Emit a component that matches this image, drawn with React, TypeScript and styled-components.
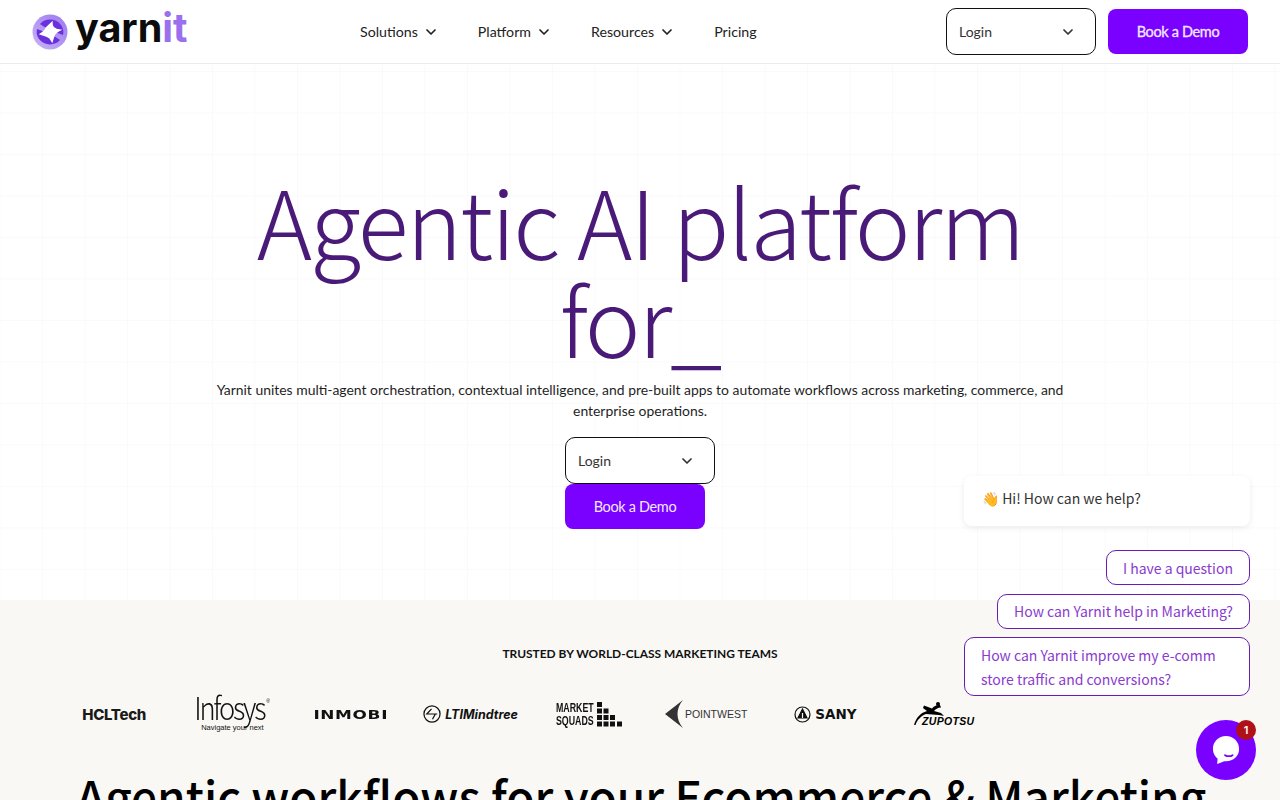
import styled, { createGlobalStyle } from 'styled-components'
import { ChevronDown } from 'lucide-react'

const GlobalStyle = createGlobalStyle`
  html, body {
    margin: 0;
    padding: 0;
    height: 800px;
    overflow: hidden;
    background: #fff;
  }
  * { box-sizing: border-box; }
`

const NAV_ITEMS = ['Solutions', 'Platform', 'Resources']

const CHAT_OPTIONS = [
  'I have a question',
  'How can Yarnit help in Marketing?',
  'How can Yarnit improve my e-comm store traffic and conversions?',
]

function LogoMark () {
  return (
    <svg width="36" height="36" viewBox="0 0 36 36">
      <defs>
        <linearGradient id="ring" x1="0" y1="1" x2="1" y2="0">
          <stop offset="0" stopColor="#c9b4f9" />
          <stop offset="1" stopColor="#9a78ee" />
        </linearGradient>
      </defs>
      <circle cx="18" cy="18" r="17.500" fill="url(#ring)" />
      <path d="M8 10 C13 4 24 4 29 11 C31 14 32 17 31 21 L23 18 C22 14 18 12 14 14 Z" fill="#6a30dd" />
      <path d="M28 26 C23 32 12 32 7 25 C5 22 4 19 5 15 L13 18 C14 22 18 24 22 22 Z" fill="#6a30dd" />
      <path
        d="M20.500 8 C20 12 21 14 24 15 L29 16 C25 18 23 19 22 22 L20 28 C18 24 17 23 14 22 L8 20 C11 18 13 17 14 14 Z"
        fill="#fff"
        transform="translate(18 18) scale(1.120) translate(-18 -18)"
      />
    </svg>
  )
}

function ChatIcon () {
  return (
    <svg width="28" height="30" viewBox="0 0 30 32">
      <path d="M15 1 C23 1 29 7 29 15 C29 23 23 28 15 28 C13 28 12 28.500 10.500 29 L5.500 31 L6 25.500 C3 23 1 19.500 1 15 C1 7 7 1 15 1 Z" fill="#fff" />
      <path d="M14 21.500 C16 23 20 23 22 21.500" stroke="#7a00ff" strokeWidth="2" fill="none" strokeLinecap="round" />
    </svg>
  )
}

function LoginSelect () {
  return (
    <SelectBox>
      <span>Login</span>
      <ChevronDown size={16} strokeWidth={2.6} />
    </SelectBox>
  )
}

export default function App () {
  return (
    <Page>
      <GlobalStyle />
      <Header>
        <Brand>
          <LogoMark />
          <BrandName>yarn<BrandAccent>it</BrandAccent></BrandName>
        </Brand>
        <Nav>
          {NAV_ITEMS.map((item) => (
            <NavItem key={item}>
              {item}
              <ChevronDown size={16} strokeWidth={2.6} />
            </NavItem>
          ))}
          <NavItem>Pricing</NavItem>
        </Nav>
        <HeaderActions>
          <LoginSelect />
          <DemoButton $strong>Book a Demo</DemoButton>
        </HeaderActions>
      </Header>

      <Hero>
        <HeroTitle>Agentic AI platform<br />for_</HeroTitle>
        <HeroText>
          Yarnit unites multi-agent orchestration, contextual intelligence, and pre-built apps to automate workflows across marketing, commerce, and enterprise operations.
        </HeroText>
        <HeroActions>
          <LoginSelect />
          <DemoButton>Book a Demo</DemoButton>
        </HeroActions>
      </Hero>

      <Trusted>
        <TrustedLabel>TRUSTED BY WORLD-CLASS MARKETING TEAMS</TrustedLabel>
        <LogoRow>
          <LogoCell><HclLogo>HCLTech</HclLogo></LogoCell>
          <LogoCell>
            <InfosysLogo>
              <InfosysName>Infosys<InfosysMark>®</InfosysMark></InfosysName>
              <InfosysTag>Navigate your next</InfosysTag>
            </InfosysLogo>
          </LogoCell>
          <LogoCell><InmobiLogo>INMOBI</InmobiLogo></LogoCell>
          <LogoCell>
            <LtiLogo>
              <svg width="18" height="18" viewBox="0 0 19 19" fill="none" stroke="#111" strokeWidth="1.300">
                <circle cx="9.500" cy="9.500" r="8.500" />
                <path d="M9 4 L4 9.500 H15 M9 9.500 H13 L10 15" />
              </svg>
              LTIMindtree
            </LtiLogo>
          </LogoCell>
          <LogoCell>
            <SquadsLogo>
              <SquadsName>MARKET<br />SQUADS</SquadsName>
              <svg width="26" height="25" viewBox="0 0 26 25" fill="#111">
                <rect x="0" y="0" width="5" height="5" />
                <rect x="0" y="6.500" width="5" height="5" />
                <rect x="6.500" y="6.500" width="5" height="5" />
                <rect x="0" y="13" width="5" height="5" />
                <rect x="6.500" y="13" width="5" height="5" />
                <rect x="13" y="13" width="5" height="5" />
                <rect x="0" y="19.500" width="5" height="5" />
                <rect x="6.500" y="19.500" width="5" height="5" />
                <rect x="13" y="19.500" width="5" height="5" />
                <rect x="20" y="19.500" width="5" height="5" />
              </svg>
            </SquadsLogo>
          </LogoCell>
          <LogoCell>
            <PointwestLogo>
              <svg width="20" height="28" viewBox="0 0 20 28" fill="#333">
                <path d="M1 14 L19 0 C15 5 13.500 9 13.500 14 C13.500 19 15 23 19 28 Z" />
              </svg>
              POINTWEST
            </PointwestLogo>
          </LogoCell>
          <LogoCell>
            <SanyLogo>
              <svg width="17" height="17" viewBox="0 0 17 17" fill="none" stroke="#111" strokeWidth="1.200">
                <circle cx="8.500" cy="8.500" r="7.500" />
                <path d="M8.500 3 L13 12 H4 Z" fill="#111" />
                <path d="M8.500 7 V12" stroke="#f9f8f5" />
              </svg>
              SANY
            </SanyLogo>
          </LogoCell>
          <LogoCell>
            <ZupotsuLogo>
              <ZupotsuFigure width="31" height="23" viewBox="0 0 31 23" fill="#000">
                <path d="M0 23 C2 16 6 11 13 9 L9 6 L10 3.500 L18 6.500 C20 4 23 2.500 26 3 L27 5.500 C24 5.500 22 7 20 9 L27 11 L30 14 L25 13 L12 12 C7 14 3 18 1.500 23 Z" />
                <circle cx="24" cy="2" r="2" />
              </ZupotsuFigure>
              <ZupotsuName>ZUPOTSU</ZupotsuName>
            </ZupotsuLogo>
          </LogoCell>
        </LogoRow>
        <SectionTitle>Agentic workflows for your Ecommerce &amp; Marketing</SectionTitle>
      </Trusted>

      <ChatWidget>
        <ChatGreeting><WaveEmoji>👋</WaveEmoji> Hi! How can we help?</ChatGreeting>
        <ChatOptions>
          {CHAT_OPTIONS.map((option) => (
            <ChatOption key={option}>{option}</ChatOption>
          ))}
        </ChatOptions>
      </ChatWidget>
      <ChatLauncher>
        <ChatIcon />
        <ChatBadge>1</ChatBadge>
      </ChatLauncher>
    </Page>
  )
}

const Page = styled.div`
  position: relative;
  height: 800px;
  overflow: hidden;
  font-family: Lato, "Liberation Sans", sans-serif;
  color: #1f1f1f;
`

const Header = styled.header`
  display: flex;
  align-items: center;
  height: 64px;
  padding: 0 32px;
  border-bottom: 1px solid #ececec;
  background: #fff;
`

const Brand = styled.div`
  display: flex;
  align-items: center;
  gap: 7px;
  width: 328px;
`

const BrandName = styled.span`
  font-family: Inter, sans-serif;
  font-size: 39.500px;
  font-weight: 700;
  letter-spacing: 0;
  line-height: 1;
  color: #0b0b0b;
  margin-top: -5px;
`

const BrandAccent = styled.span`
  color: #9a70ee;
`

const Nav = styled.nav`
  display: flex;
  align-items: center;
  gap: 39px;
  flex: 1;
`

const NavItem = styled.a`
  display: flex;
  align-items: center;
  gap: 5px;
  font-size: 14.200px;
  color: #222;
`

const HeaderActions = styled.div`
  display: flex;
  align-items: center;
  gap: 12px;
`

const SelectBox = styled.div`
  display: flex;
  align-items: center;
  justify-content: space-between;
  width: 150px;
  height: 47px;
  padding: 0 19px 0 12px;
  background: #fff;
  border: 1px solid #111;
  border-radius: 10px;
  font-size: 14px;
  color: #333;
`

const DemoButton = styled.button<{ $strong?: boolean }>`
  display: flex;
  align-items: center;
  justify-content: center;
  width: 140px;
  height: 45px;
  border: 0;
  border-radius: 8px;
  background: #7a00ff;
  color: #f3e8ff;
  font-family: inherit;
  font-size: 14.500px;
  letter-spacing: -0.350px;
  ${(props) => props.$strong && '-webkit-text-stroke: 0.3px #f3e8ff;'}
`

const Hero = styled.section`
  display: flex;
  flex-direction: column;
  align-items: center;
  height: 536px;
  padding-top: 106px;
  background-color: #fff;
  background-image:
    linear-gradient(#fafafa 1px, transparent 1px),
    linear-gradient(90deg, #fafafa 1px, transparent 1px);
  background-size: 42.500px 41.500px;
  background-position: 42px 7px;
`

const HeroTitle = styled.h1`
  margin: 0;
  font-family: "Noto Sans CJK SC", "Noto Sans", sans-serif;
  font-size: 94px;
  font-weight: 300;
  letter-spacing: -2px;
  line-height: 98px;
  text-align: center;
  color: #4a1a78;
`

const HeroText = styled.p`
  width: 860px;
  margin: 13px 0 16px;
  font-size: 13.930px;
  line-height: 21px;
  text-align: center;
  color: #1f1f1f;
`

const HeroActions = styled.div`
  display: flex;
  flex-direction: column;
  align-items: flex-start;
  width: 150px;
`

const Trusted = styled.section`
  height: 200px;
  background: #f9f8f5;
  overflow: hidden;
`

const TrustedLabel = styled.div`
  padding-top: 47px;
  font-size: 11.950px;
  font-weight: 700;
  line-height: 14px;
  text-align: center;
  color: #111;
`

const LogoRow = styled.div`
  display: flex;
  align-items: center;
  height: 40px;
  margin-top: 33px;
  padding-left: 55px;
`

const LogoCell = styled.div`
  display: flex;
  align-items: center;
  justify-content: center;
  flex: 0 0 118.300px;
`

const HclLogo = styled.span`
  font-family: Inter, sans-serif;
  font-size: 15px;
  font-weight: 800;
  letter-spacing: -0.300px;
  color: #1a1a1a;
`

const InfosysLogo = styled.div`
  display: flex;
  flex-direction: column;
  align-items: center;
  color: #111;
`

const InfosysName = styled.span`
  height: 22px;
  font-family: "Noto Sans CJK SC", "Liberation Sans", sans-serif;
  font-size: 31px;
  font-weight: 300;
  line-height: 20px;
  letter-spacing: -2.500px;
  transform: scaleX(0.880);
`

const InfosysMark = styled.span`
  position: relative;
  top: -17px;
  margin-left: 2px;
  font-family: "Liberation Sans", sans-serif;
  font-size: 6px;
  letter-spacing: 0;
`

const InfosysTag = styled.span`
  font-family: "Liberation Sans", sans-serif;
  font-size: 7.500px;
  line-height: 9px;
  margin-top: 4px;
`

const InmobiLogo = styled.span`
  font-family: "DejaVu Sans", sans-serif;
  font-size: 13px;
  font-weight: 700;
  letter-spacing: 0.500px;
  transform: scaleX(1.300);
  color: #111;
`

const LtiLogo = styled.span`
  display: flex;
  align-items: center;
  gap: 4px;
  margin-left: 3px;
  font-family: Inter, sans-serif;
  font-size: 12.500px;
  font-style: italic;
  font-weight: 700;
  color: #111;
`

const SquadsLogo = styled.div`
  display: flex;
  align-items: center;
  gap: 2px;
  margin-left: 2px;
`

const SquadsName = styled.span`
  font-family: "Liberation Sans", sans-serif;
  font-size: 13px;
  font-weight: 700;
  line-height: 13px;
  text-align: center;
  transform: scaleX(0.680);
  margin: 0 -7.300px;
  color: #111;
`

const PointwestLogo = styled.div`
  display: flex;
  align-items: center;
  gap: 1px;
  font-family: "Liberation Sans", sans-serif;
  font-size: 10.500px;
  color: #333;
`

const SanyLogo = styled.div`
  display: flex;
  align-items: center;
  gap: 4px;
  margin-left: 3px;
  font-family: "DejaVu Sans", sans-serif;
  font-size: 13.500px;
  font-weight: 700;
  color: #111;
`

const ZupotsuLogo = styled.div`
  display: flex;
  flex-direction: column;
  align-items: flex-start;
  margin-left: 4px;
`

const ZupotsuFigure = styled.svg`
  display: block;
`

const ZupotsuName = styled.span`
  font-family: "Liberation Sans", sans-serif;
  font-size: 10.500px;
  font-style: italic;
  font-weight: 700;
  line-height: 10px;
  letter-spacing: 0.300px;
  margin: -9px 0 0 8px;
  color: #000;
`

const SectionTitle = styled.h2`
  margin: 31px 0 0;
  padding-left: 3px;
  font-family: "Noto Sans CJK SC", "Noto Sans", sans-serif;
  font-size: 46px;
  font-weight: 500;
  line-height: 60px;
  text-align: center;
  color: #000;
`

const ChatWidget = styled.aside`
  position: absolute;
  right: 30px;
  bottom: 104px;
  display: flex;
  flex-direction: column;
  align-items: flex-end;
  width: 286px;
  font-family: "Noto Sans CJK SC", "Noto Sans", sans-serif;
  font-size: 14px;
`

const ChatGreeting = styled.div`
  width: 100%;
  height: 50px;
  padding: 0 18px;
  line-height: 45px;
  background: #fff;
  border-radius: 8px;
  box-shadow: 0 2px 6px rgba(0, 0, 0, 0.080);
  color: #333;
`

const WaveEmoji = styled.span`
  filter: hue-rotate(-14deg) saturate(1.200);
`

const ChatOptions = styled.div`
  display: flex;
  flex-direction: column;
  align-items: flex-end;
  gap: 8.500px;
  margin-top: 24px;
`

const ChatOption = styled.button`
  padding: 4.500px 16px;
  background: #fff;
  border: 1px solid #6a1bb8;
  border-radius: 10px;
  font: inherit;
  line-height: 24px;
  text-align: left;
  color: #8a3bd0;
`

const ChatLauncher = styled.div`
  position: absolute;
  left: 1196px;
  top: 720px;
  display: flex;
  align-items: center;
  justify-content: center;
  width: 60px;
  height: 60px;
  border-radius: 50%;
  background: #7a00ff;
`

const ChatBadge = styled.span`
  position: absolute;
  top: 0;
  right: 0;
  width: 20px;
  height: 20px;
  border-radius: 50%;
  background: #b01116;
  color: #fff;
  font-family: Inter, sans-serif;
  font-size: 11px;
  font-weight: 600;
  line-height: 20px;
  text-align: center;
`
